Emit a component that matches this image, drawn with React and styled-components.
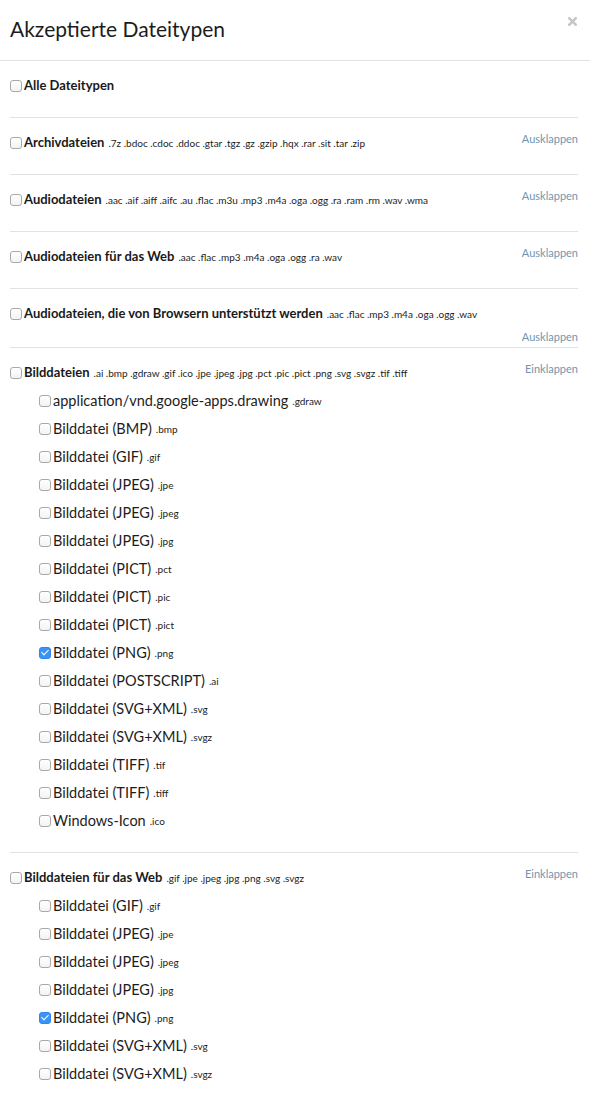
import React from 'react'
import styled, { createGlobalStyle } from 'styled-components'

const GlobalStyle = createGlobalStyle`
  html, body {
    margin: 0;
    padding: 0;
    background: #fff;
  }
  body {
    font-family: Lato, "Open Sans", sans-serif;
    color: #1c1c1c;
  }
`

const sections = [
  { name: 'Alle Dateitypen', exts: '', toggle: null },
  { name: 'Archivdateien', exts: '.7z .bdoc .cdoc .ddoc .gtar .tgz .gz .gzip .hqx .rar .sit .tar .zip', toggle: 'Ausklappen' },
  { name: 'Audiodateien', exts: '.aac .aif .aiff .aifc .au .flac .m3u .mp3 .m4a .oga .ogg .ra .ram .rm .wav .wma', toggle: 'Ausklappen' },
  { name: 'Audiodateien für das Web', exts: '.aac .flac .mp3 .m4a .oga .ogg .ra .wav', toggle: 'Ausklappen' },
  { name: 'Audiodateien, die von Browsern unterstützt werden', exts: '.aac .flac .mp3 .m4a .oga .ogg .wav', toggle: 'Ausklappen', wrapped: true },
  {
    name: 'Bilddateien',
    exts: '.ai .bmp .gdraw .gif .ico .jpe .jpeg .jpg .pct .pic .pict .png .svg .svgz .tif .tiff',
    toggle: 'Einklappen',
    items: [
      ['application/vnd.google-apps.drawing', '.gdraw'],
      ['Bilddatei (BMP)', '.bmp'],
      ['Bilddatei (GIF)', '.gif'],
      ['Bilddatei (JPEG)', '.jpe'],
      ['Bilddatei (JPEG)', '.jpeg'],
      ['Bilddatei (JPEG)', '.jpg'],
      ['Bilddatei (PICT)', '.pct'],
      ['Bilddatei (PICT)', '.pic'],
      ['Bilddatei (PICT)', '.pict'],
      ['Bilddatei (PNG)', '.png', true],
      ['Bilddatei (POSTSCRIPT)', '.ai'],
      ['Bilddatei (SVG+XML)', '.svg'],
      ['Bilddatei (SVG+XML)', '.svgz'],
      ['Bilddatei (TIFF)', '.tif'],
      ['Bilddatei (TIFF)', '.tiff'],
      ['Windows-Icon', '.ico'],
    ],
  },
  {
    name: 'Bilddateien für das Web',
    exts: '.gif .jpe .jpeg .jpg .png .svg .svgz',
    toggle: 'Einklappen',
    items: [
      ['Bilddatei (GIF)', '.gif'],
      ['Bilddatei (JPEG)', '.jpe'],
      ['Bilddatei (JPEG)', '.jpeg'],
      ['Bilddatei (JPEG)', '.jpg'],
      ['Bilddatei (PNG)', '.png', true],
      ['Bilddatei (SVG+XML)', '.svg'],
      ['Bilddatei (SVG+XML)', '.svgz'],
    ],
  },
]

export default function App() {
  return (
    <>
      <GlobalStyle />
      <Dialog>
        <Header>
          <Title>Akzeptierte Dateitypen</Title>
          <Close aria-label="Schließen">
            <svg width="9" height="9" viewBox="0 0 9 9">
              <path d="M1.3 1.3 L7.7 7.7 M7.7 1.3 L1.3 7.7" stroke="#c6c6c6" strokeWidth="2.6" strokeLinecap="square" />
            </svg>
          </Close>
        </Header>
        <Body>
          {sections.map((s) => (
            <Section key={s.name} $wrapped={s.wrapped}>
              <Head>
                <Label>
                  <Box type="checkbox" />
                  <Name>{s.name}</Name>
                  {s.exts && <Ext>{s.exts}</Ext>}
                </Label>
                {s.toggle && !s.wrapped && <Toggle>{s.toggle}</Toggle>}
              </Head>
              {s.wrapped && (
                <ToggleRow>
                  <Toggle>{s.toggle}</Toggle>
                </ToggleRow>
              )}
              {s.items && (
                <List>
                  {s.items.map(([label, ext, checked], i) => (
                    <Item key={i}>
                      <Box type="checkbox" defaultChecked={!!checked} />
                      <ItemName>{label}</ItemName>
                      <Ext>{ext}</Ext>
                    </Item>
                  ))}
                </List>
              )}
            </Section>
          ))}
        </Body>
      </Dialog>
    </>
  )
}

const Dialog = styled.div`
  width: 590px;
  background: #fff;
`

const Header = styled.div`
  height: 61px;
  border-bottom: 1px solid #e3e3e3;
  display: flex;
  align-items: center;
  justify-content: space-between;
  padding: 0 13px 4px 10px;
  box-sizing: border-box;
`

const Title = styled.h1`
  margin: 0;
  font-size: 21px;
  font-weight: 400;
  color: #1c1c1c;
`

const Close = styled.span`
  display: flex;
  margin-top: -14px;
`

const Body = styled.div`
  padding: 0 12px 0 10px;
`

const Section = styled.div`
  padding: 10px 0 ${(p) => (p.$wrapped ? '0' : '18px')};
  border-bottom: 1px solid #e3e3e3;
`

const Head = styled.div`
  display: flex;
  align-items: flex-start;
  justify-content: space-between;
  min-height: 28px;
`

const Label = styled.label`
  display: flex;
  align-items: center;
  height: 28px;
  white-space: nowrap;
`

const Box = styled.input`
  appearance: none;
  -webkit-appearance: none;
  box-sizing: border-box;
  width: 12px;
  height: 12px;
  margin: 1px 2px 0 0;
  border: 1px solid #a9a9a9;
  border-radius: 3px;
  background: linear-gradient(#fff, #f3f3f3);
  display: inline-flex;
  align-items: center;
  justify-content: center;

  &:checked {
    border-color: #2f86f0;
    background: #3a94f6;
  }
  &:checked::after {
    content: '';
    width: 3px;
    height: 6px;
    border: solid #fff;
    border-width: 0 1.5px 1.5px 0;
    transform: translateY(-1px) rotate(45deg);
  }
`

const Name = styled.span`
  font-size: 13px;
  font-weight: 700;
  color: #1a1a1a;
  margin-right: 4px;
`

const Ext = styled.span`
  font-size: 10px;
  color: #1c1c1c;
  margin-top: 2px;
`

const Toggle = styled.span`
  font-size: 11px;
  color: #7096b2;
  line-height: 22px;
  cursor: pointer;
`

const ToggleRow = styled.div`
  display: flex;
  justify-content: flex-end;
  height: 20px;
  align-items: center;
`

const List = styled.div`
  display: flex;
  flex-direction: column;
  padding-left: 29px;
`

const Item = styled.label`
  display: flex;
  align-items: center;
  height: 28px;
  white-space: nowrap;
`

const ItemName = styled.span`
  font-size: 14.5px;
  color: #1c1c1c;
  margin-right: 4px;
`
